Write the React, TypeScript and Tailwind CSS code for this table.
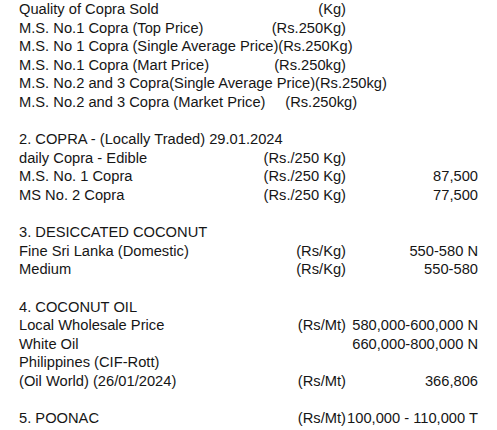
type Row = {
  label?: string;
  unit?: string;
  value?: string;
  text?: string;
};

const rows: Row[] = [
  { label: "Quality of Copra Sold", unit: "(Kg)" },
  { label: "M.S. No.1 Copra (Top Price)", unit: "(Rs.250Kg)" },
  { text: "M.S. No 1 Copra (Single Average Price)(Rs.250Kg)" },
  { label: "M.S. No.1 Copra (Mart Price)", unit: "(Rs.250kg)" },
  { text: "M.S. No.2 and 3 Copra(Single Average Price)(Rs.250kg)" },
  { label: "M.S. No.2 and 3 Copra (Market Price)", unit: "(Rs.250kg)" },
  {},
  { text: "2. COPRA - (Locally Traded) 29.01.2024" },
  { label: "daily Copra - Edible", unit: "(Rs./250 Kg)" },
  { label: "M.S. No. 1 Copra", unit: "(Rs./250 Kg)", value: "87,500" },
  { label: "MS No. 2 Copra", unit: "(Rs./250 Kg)", value: "77,500" },
  {},
  { text: "3. DESICCATED COCONUT" },
  { label: "Fine Sri Lanka (Domestic)", unit: "(Rs/Kg)", value: "550-580 N" },
  { label: "Medium", unit: "(Rs/Kg)", value: "550-580" },
  {},
  { text: "4. COCONUT OIL" },
  { label: "Local Wholesale Price", unit: "(Rs/Mt)", value: "580,000-600,000 N" },
  { label: "White Oil", value: "660,000-800,000 N" },
  { text: "Philippines (CIF-Rott)" },
  { label: "(Oil World) (26/01/2024)", unit: "(Rs/Mt)", value: "366,806" },
  {},
  { label: "5. POONAC", unit: "(Rs/Mt)", value: "100,000 - 110,000 T" },
];

function PriceRow({ row }: { row: Row }) {
  if (row.text !== undefined) {
    return <div className="h-[18.6px] whitespace-nowrap">{row.text}</div>;
  }
  if (row.label === undefined) {
    return <div className="h-[18.6px]" />;
  }
  return (
    <div className="flex h-[18.6px] whitespace-nowrap">
      <span className="flex-1">{row.label}</span>
      <span className="w-[100px] text-right">{row.unit ?? ""}</span>
      <span className="w-[132px] text-right">{row.value ?? ""}</span>
    </div>
  );
}

export default function App() {
  return (
    <div className="h-[430px] w-[497px] overflow-hidden bg-white px-[19px] font-['Liberation_Sans',Arial,sans-serif] text-[14.7px] leading-[18.6px] text-[#161616]">
      {rows.map((row, i) => (
        <PriceRow key={i} row={row} />
      ))}
    </div>
  );
}
